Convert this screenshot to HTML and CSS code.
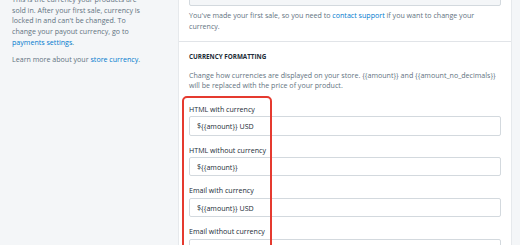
FILE: index.html
```html
<!DOCTYPE html>
<html lang="en">
<head>
  <meta charset="UTF-8" />
  <title>Currency settings</title>
  <link rel="stylesheet" href="styles.css">
</head>
<body>
  <div class="layout">
    <div class="aside">
      <p>This is the currency your products are sold in. After your first sale, currency is locked in and can't be changed. To change your payout currency, go to <a href="#">payments settings</a>.</p>
      <p>Learn more about your <a href="#">store currency</a>.</p>
    </div>

    <div class="card">
      <div class="section">
        <div class="select"></div>
        <p class="note">You've made your first sale, so you need to <a href="#">contact support</a> if you want to change your currency.</p>
      </div>

      <div class="section">
        <h2>Currency formatting</h2>
        <p class="note">Change how currencies are displayed on your store. {{amount}} and {{amount_no_decimals}} will be replaced with the price of your product.</p>

        <div class="fields">
          <div class="highlight"></div>
          <label class="field">
            <span>HTML with currency</span>
            <input type="text" value="${{amount}} USD" />
          </label>
          <label class="field">
            <span>HTML without currency</span>
            <input type="text" value="${{amount}}" />
          </label>
          <label class="field">
            <span>Email with currency</span>
            <input type="text" value="${{amount}} USD" />
          </label>
          <label class="field">
            <span>Email without currency</span>
            <input type="text" value="${{amount}}" />
          </label>
        </div>
      </div>
    </div>
  </div>
</body>
</html>
```

FILE: styles.css
```css
body {
  margin: 0;
  background: #f4f6f8;
  color: #637381;
  font-family: "Open Sans", "Noto Sans", sans-serif;
  font-size: 7.1px;
  line-height: 10.7px;
  overflow: hidden;
}
a { color: #007ace; text-decoration: none; }
p { margin: 0; }

.layout {
  display: flex;
  gap: 31px;
  margin-top: -20px;
  padding-left: 12px;
}

.aside { width: 135px; padding-top: 14px; }
.aside p + p { margin-top: 6.6px; }

.card {
  width: 332px;
  background: #fff;
  border: 1px solid #e6e9ec;
  border-top: 0;
}
.section { padding: 7px 10px 10px; }
.section + .section { border-top: 1px solid #e1e4e8; padding-top: 10px; }

.select {
  height: 19px;
  box-sizing: border-box;
  border: 1px solid #d3d9de;
  border-radius: 2px;
  background: #f4f6f8;
}
.select + .note { margin-top: 4px; }

h2 {
  margin: 0 0 8.3px;
  color: #212b36;
  font-size: 6.3px;
  line-height: 9px;
  font-weight: 700;
  text-transform: uppercase;
}

.fields { position: relative; margin-top: 12.5px; }
.field { display: block; margin-bottom: 9px; color: #212b36; }
.field span { display: block; margin-bottom: 1.7px; }
.field input {
  display: block;
  width: 100%;
  height: 19.5px;
  box-sizing: border-box;
  margin: 0;
  padding: 0 7px;
  border: 1px solid #d3d9de;
  border-radius: 2px;
  font: inherit;
  color: #212b36;
  background: #fff;
}

.highlight {
  position: absolute;
  left: -7.5px;
  top: -7.6px;
  width: 90px;
  height: 220px;
  box-sizing: border-box;
  border: 2px solid #e53a2f;
  border-radius: 5px;
}
```
